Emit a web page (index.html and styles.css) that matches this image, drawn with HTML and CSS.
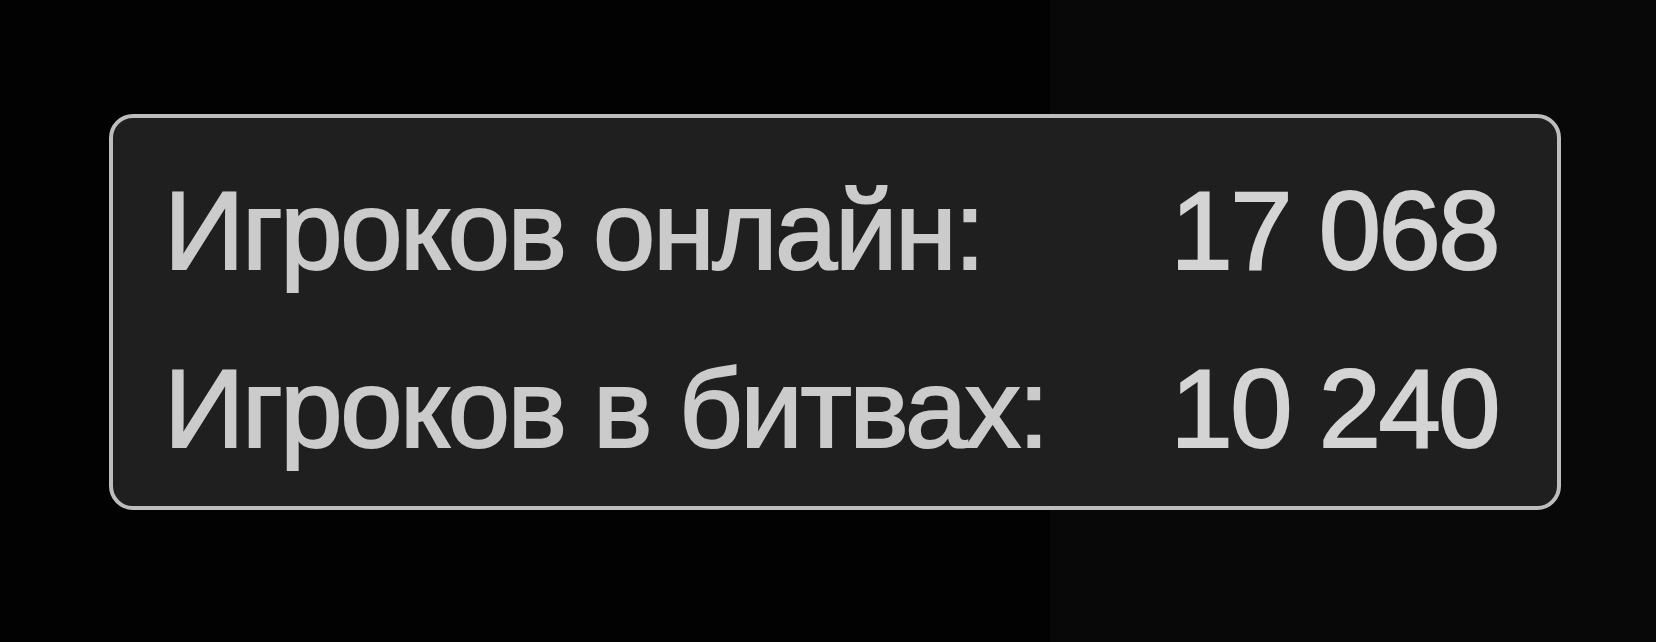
FILE: index.html
```html
<!DOCTYPE html>
<html lang="ru">
  <head>
    <meta charset="UTF-8" />
    <meta name="viewport" content="width=device-width, initial-scale=1.0" />
    <title>Онлайн</title>
    <link rel="stylesheet" href="styles.css">
  </head>
  <body>
    <div class="online-box">
      <span class="label">Игроков онлайн:</span>
      <span class="value">17 068</span>
      <span class="label">Игроков в битвах:</span>
      <span class="value">10 240</span>
    </div>
  </body>
</html>
```

FILE: styles.css
```css
body {
  margin: 0;
  height: 642px;
  padding: 114px 0 0 109px;
  box-sizing: border-box;
  background: linear-gradient(to right, #020202 1050px, #080808 1050px);
  font-family: "Liberation Sans", Arial, sans-serif;
}
.online-box {
  width: 1452px;
  height: 396px;
  box-sizing: border-box;
  border: 4px solid #bdbdbd;
  border-radius: 24px;
  background-color: #1f1f1f;
  padding: 33px 59px 0 51px;
  display: grid;
  grid-template-columns: auto 1fr;
  font-size: 112px;
  line-height: 159px;
  color: #cbcbcb;
  letter-spacing: -2.5px;
  -webkit-text-stroke: 2px #cbcbcb;
}
.label {
  white-space: nowrap;
}
.value {
  text-align: right;
  white-space: nowrap;
  color: #d4d4d4;
  -webkit-text-stroke-color: #d4d4d4;
}
```
